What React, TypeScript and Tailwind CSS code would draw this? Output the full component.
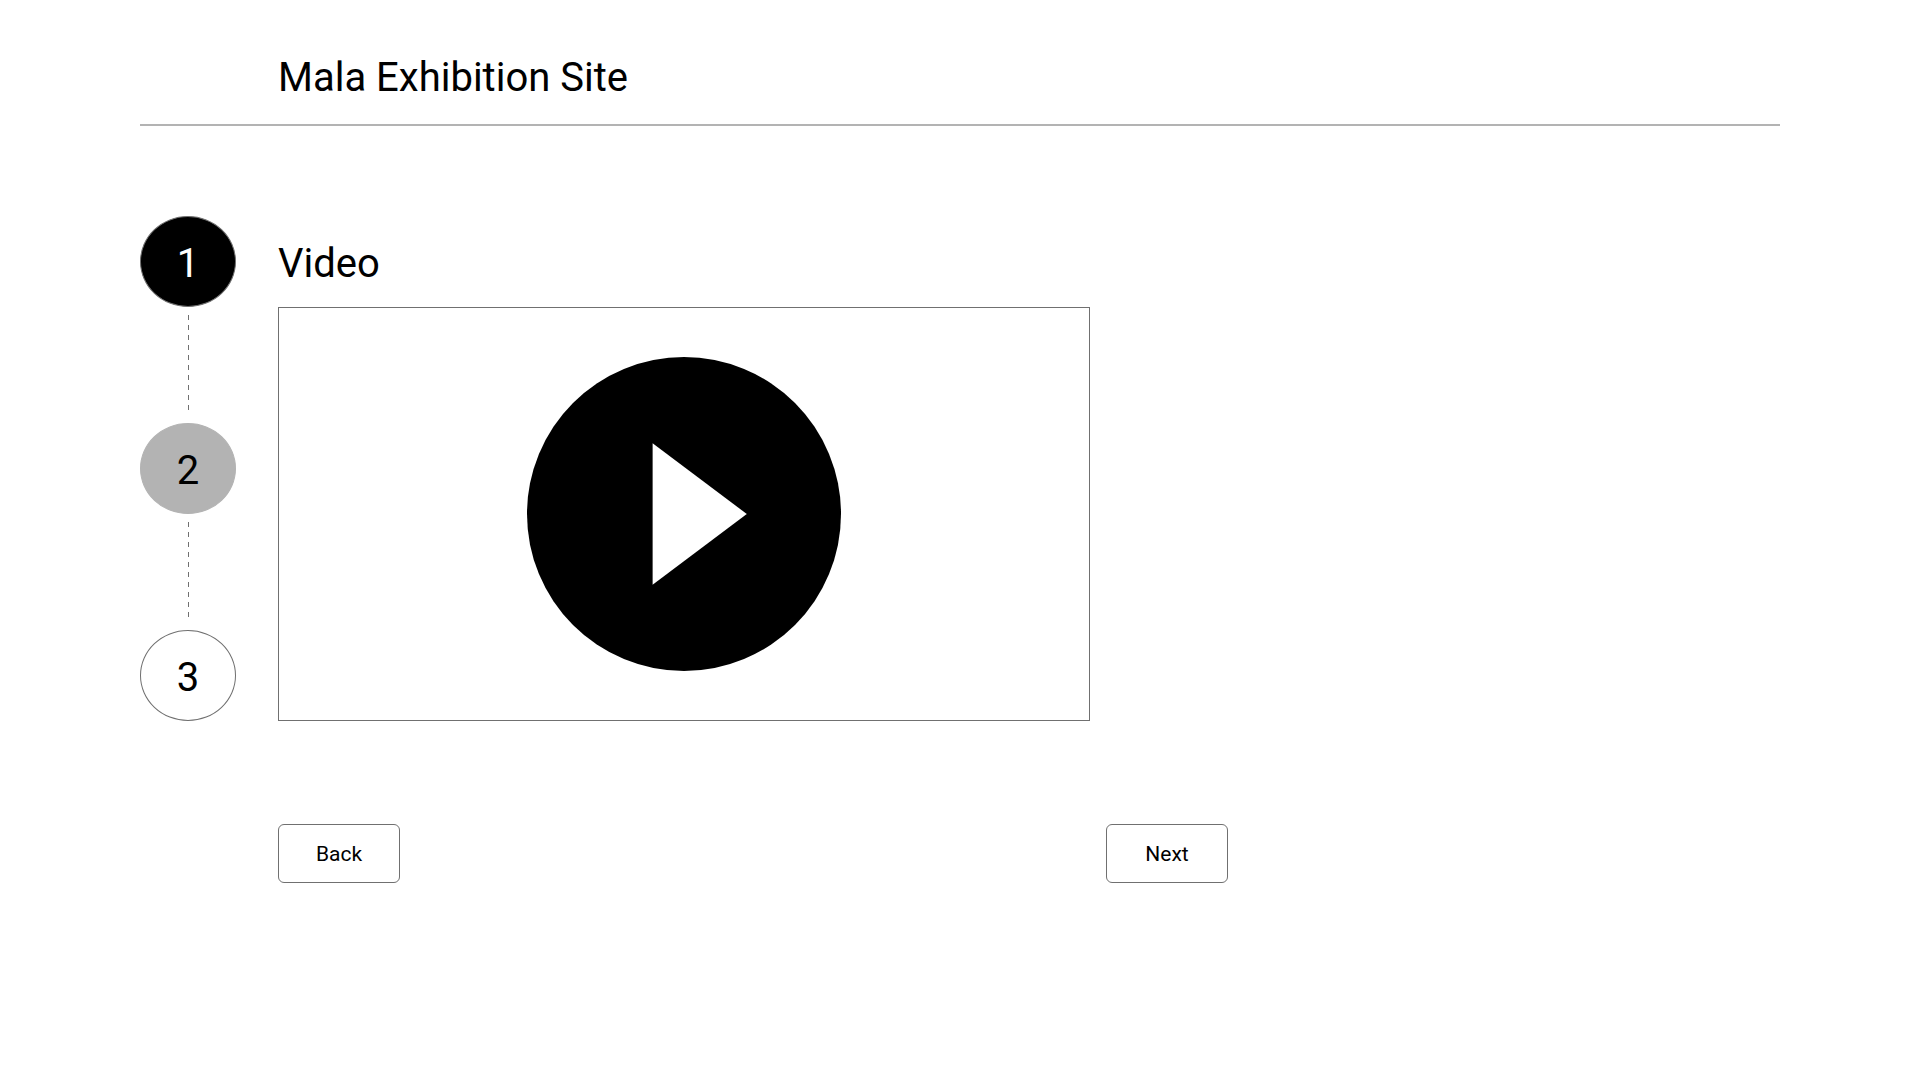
import { Fragment, useState } from "react";
import clsx from "clsx";

const steps = [
    { id: 1, style: "bg-black text-white border-[#707070]" },
    { id: 2, style: "bg-[#b3b3b3] text-black border-[#b3b3b3]" },
    { id: 3, style: "bg-white text-black border-[#707070]" },
]

function Connector(){
    return(
        <svg width="1" height="95" className="ml-px mt-2 mb-[13px]" aria-hidden="true">
            <path d="M0.5 0V95" stroke="#707070" strokeWidth="1" strokeDasharray="5 5"/>
        </svg>
    )
}

function Stepper(){
    return(
        <nav aria-label="Steps" className="flex flex-col items-center w-24 shrink-0">
            {steps.map((step, i) => (
                <Fragment key={step.id}>
                    {i > 0 && <Connector/>}
                    <button
                        type="button"
                        className={clsx("flex justify-center items-center w-24 h-[91px] pt-1 rounded-[50%] border text-[40px] leading-none", step.style)}
                    >
                        {step.id}
                    </button>
                </Fragment>
            ))}
        </nav>
    )
}

function NavButton({ label }: { label: string }){
    return(
        <button type="button" className="w-[122px] h-[59px] pt-0.5 rounded-md border border-[#707070] bg-white text-[21px]">
            {label}
        </button>
    )
}

function App(){
    const [playing, setPlaying] = useState(false)

    return(
        <div className="mx-[140px] pb-12 text-black font-['Roboto',sans-serif]">
            <header className="pl-[138px] pt-[54px] pb-[22px] border-b-2 border-[#b3b3b3]">
                <h1 className="text-[40px] leading-12">Mala Exhibition Site</h1>
            </header>

            <main className="flex gap-[42px] mt-[90px]">
                <Stepper/>
                <div className="w-full max-w-[950px]">
                    <h2 className="pt-6 pb-[19px] text-[40px] leading-12">Video</h2>
                    <div className="flex justify-center items-center w-full max-w-[812px] h-[414px] border border-[#707070]">
                        <button
                            type="button"
                            aria-label={playing ? "Pause video" : "Play video"}
                            onClick={() => setPlaying(!playing)}
                            className="rounded-full"
                        >
                            <svg width="314" height="314" viewBox="0 0 314 314">
                                <circle cx="157" cy="157" r="157" fill="#000"/>
                                <path d="M125.6 86.3L219.8 157L125.6 227.7Z" fill="#fff"/>
                            </svg>
                        </button>
                    </div>
                    <div className="flex justify-between mt-[103px]">
                        <NavButton label="Back"/>
                        <NavButton label="Next"/>
                    </div>
                </div>
            </main>
        </div>
    )
}

export default App;
